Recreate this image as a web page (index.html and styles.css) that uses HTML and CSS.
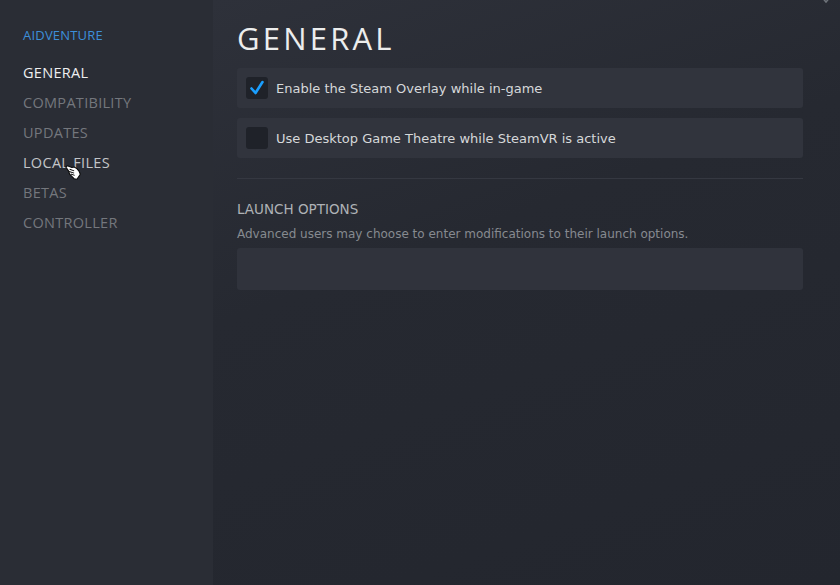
FILE: index.html
```html
<!DOCTYPE html>
<html>
<head>
<meta charset="utf-8">
<link rel="stylesheet" href="styles.css">
</head>
<body>
<div class="app">
  <nav class="sidebar">
    <div class="game">AIDVENTURE</div>
    <ul class="menu">
      <li class="item active">GENERAL</li>
      <li class="item">COMPATIBILITY</li>
      <li class="item">UPDATES</li>
      <li class="item hover">LOCAL FILES</li>
      <li class="item">BETAS</li>
      <li class="item">CONTROLLER</li>
    </ul>
    <svg class="cursor" width="18" height="18" viewBox="0 0 16 16">
      <path d="M1.5 3.5 L3 2.5 L7 4 L9 3.5 L11.5 5 L13.5 7.5 L14.5 10 L11.5 14.5 L9 14 L6.5 11.5 L5 10 L4 7 Z" fill="#fff" stroke="#0b0b0b" stroke-width="1" stroke-linejoin="round"/>
      <path d="M5 5.5 L9 7 M4.5 7.5 L9 9 M6 9.8 L9.5 11" stroke="#0b0b0b" stroke-width="0.9" fill="none"/>
    </svg>
  </nav>
  <main class="content">
    <h1 class="title">GENERAL</h1>
    <div class="option">
      <span class="box checked">
        <svg width="22" height="22" viewBox="0 0 22 22"><path d="M5.5 11.5 L9.5 16 L16.5 5" fill="none" stroke="#1a9fff" stroke-width="2.6" stroke-linecap="round" stroke-linejoin="round"/></svg>
      </span>
      <span class="label">Enable the Steam Overlay while in-game</span>
    </div>
    <div class="option">
      <span class="box"></span>
      <span class="label">Use Desktop Game Theatre while SteamVR is active</span>
    </div>
    <hr class="sep">
    <h2 class="section">LAUNCH OPTIONS</h2>
    <p class="desc">Advanced users may choose to enter modifications to their launch options.</p>
    <div class="input"></div>
  </main>
  <svg class="close" width="14" height="8" viewBox="0 0 14 8"><path d="M1 -5 L7 2 L13 -5" fill="none" stroke="#6f747b" stroke-width="1.5"/></svg>
</div>
</body>
</html>
```
FILE: styles.css
```css
html, body {
  margin: 0;
  padding: 0;
  height: 100%;
  background: #24272f;
}
.app {
  display: flex;
  width: 840px;
  height: 585px;
  position: relative;
  overflow: hidden;
}
.sidebar {
  width: 213px;
  flex: none;
  background: #2a2d35;
  padding: 28px 0 0 23px;
  box-sizing: border-box;
  position: relative;
  font-family: "Open Sans", sans-serif;
}
.game {
  color: #3d8fd9;
  font-size: 13px;
  letter-spacing: 0.2px;
  line-height: 14px;
  margin-bottom: 16px;
}
.menu {
  list-style: none;
  margin: 0;
  padding: 0;
}
.item {
  font-size: 14.5px;
  line-height: 30px;
  letter-spacing: 0.3px;
  color: #74777d;
}
.item.active { color: #eeeff0; }
.item.hover { color: #c3c5c8; }
.cursor {
  position: absolute;
  left: 64px;
  top: 163px;
}
.content {
  flex: 1;
  padding: 0 37px 0 24px;
  background: linear-gradient(160deg, #2e313a 0%, #262931 40%, #23262e 100%);
  font-family: "DejaVu Sans", sans-serif;
}
.title {
  margin: 20px 0 12px;
  font-family: "Open Sans", sans-serif;
  font-weight: 400;
  font-size: 31px;
  line-height: 36px;
  letter-spacing: 3.2px;
  color: #eceded;
}
.option {
  display: flex;
  align-items: center;
  height: 40px;
  background: #31343d;
  border-radius: 3px;
  padding-left: 9px;
  margin-bottom: 10px;
}
.box {
  width: 22px;
  height: 22px;
  background: #1f2229;
  border-radius: 3px;
  margin-right: 8px;
  display: flex;
}
.label {
  color: #d6d8da;
  font-size: 13px;
}
.sep {
  border: 0;
  border-top: 1px solid #353841;
  margin: 20px 0 22px;
}
.section {
  margin: 0;
  font-weight: 400;
  font-size: 13.5px;
  line-height: 16px;
  color: #aeb2b6;
  font-family: "DejaVu Sans", sans-serif;
}
.desc {
  margin: 10px 0 7px;
  font-size: 12px;
  color: #868a90;
}
.input {
  height: 42px;
  background: #30333c;
  border-radius: 3px;
}
.close {
  position: absolute;
  right: 7px;
  top: 0;
}
```
